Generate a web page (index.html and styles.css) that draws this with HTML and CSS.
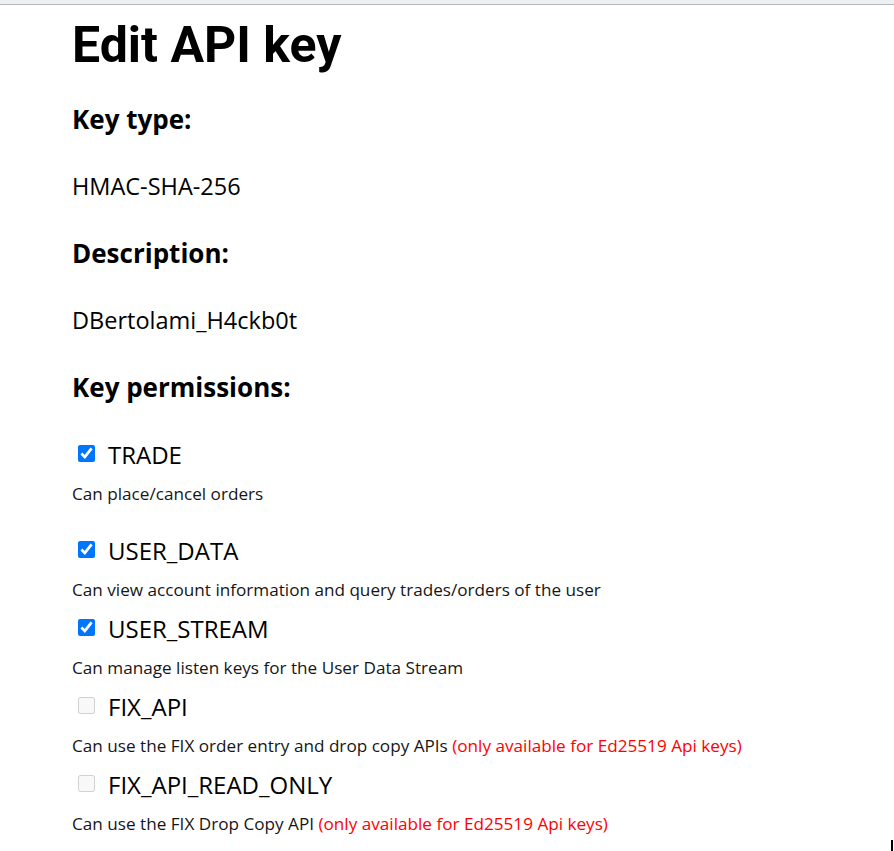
FILE: index.html
```html
<!DOCTYPE html>
<html>
<head>
<meta charset="utf-8">
<link rel="stylesheet" href="styles.css">
</head>
<body>
<div class="topbar"></div>
<main class="page">
  <h1 class="title">Edit API key</h1>
  <h3 class="heading heading-first">Key type:</h3>
  <p class="value">HMAC-SHA-256</p>
  <h3 class="heading">Description:</h3>
  <p class="value">DBertolami_H4ckb0t</p>
  <h3 class="heading">Key permissions:</h3>
  <ul class="perms">
    <li class="perm perm-first">
      <label class="perm-label"><input type="checkbox" class="perm-box" checked> TRADE</label>
      <p class="perm-desc">Can place/cancel orders</p>
    </li>
    <li class="perm">
      <label class="perm-label"><input type="checkbox" class="perm-box" checked> USER_DATA</label>
      <p class="perm-desc">Can view account information and query trades/orders of the user</p>
    </li>
    <li class="perm">
      <label class="perm-label"><input type="checkbox" class="perm-box" checked> USER_STREAM</label>
      <p class="perm-desc">Can manage listen keys for the User Data Stream</p>
    </li>
    <li class="perm">
      <label class="perm-label"><input type="checkbox" class="perm-box" disabled> FIX_API</label>
      <p class="perm-desc">Can use the FIX order entry and drop copy APIs <span class="warn">(only available for Ed25519 Api keys)</span></p>
    </li>
    <li class="perm">
      <label class="perm-label"><input type="checkbox" class="perm-box" disabled> FIX_API_READ_ONLY</label>
      <p class="perm-desc">Can use the FIX Drop Copy API <span class="warn">(only available for Ed25519 Api keys)</span></p>
    </li>
  </ul>
</main>
<span class="edge-mark"></span>
</body>
</html>
```
FILE: styles.css
```css
html, body {
  margin: 0;
  padding: 0;
  background: #ffffff;
}
body {
  font-family: "Open Sans", "Noto Sans", sans-serif;
  color: #000000;
  height: 851px;
  overflow: hidden;
  position: relative;
}
.topbar {
  height: 4px;
  background: #eef1f4;
  border-bottom: 1px solid #b4b8bc;
}
.page {
  padding-left: 72px;
}
.title {
  margin: 12px 0 0;
  font-family: Roboto, "Open Sans", sans-serif;
  font-size: 50px;
  line-height: 56px;
  font-weight: 700;
}
.heading {
  margin: 35px 0 0;
  font-size: 26px;
  line-height: 34px;
  font-weight: 700;
}
.heading-first {
  margin-top: 29px;
}
.value {
  margin: 35px 0 0;
  font-size: 23.5px;
  line-height: 30px;
}
.perms {
  list-style: none;
  margin: 36px 0 0;
  padding: 0;
}
.perm {
  margin: 0;
}
.perm-label {
  display: flex;
  align-items: center;
  gap: 13px;
  font-size: 24px;
  line-height: 30px;
  color: #000;
}
.perm-box {
  width: 17px;
  height: 17px;
  margin: 0 0 3px 6px;
}
.perm-desc {
  margin: 12px 0 12px;
  font-size: 17.15px;
  line-height: 24px;
  color: #161616;
}
.perm-first .perm-desc {
  margin-bottom: 30px;
}
.warn {
  color: #ff0000;
}
.edge-mark {
  position: absolute;
  right: 1px;
  top: 840px;
  width: 2px;
  height: 11px;
  background: #000;
}
```
